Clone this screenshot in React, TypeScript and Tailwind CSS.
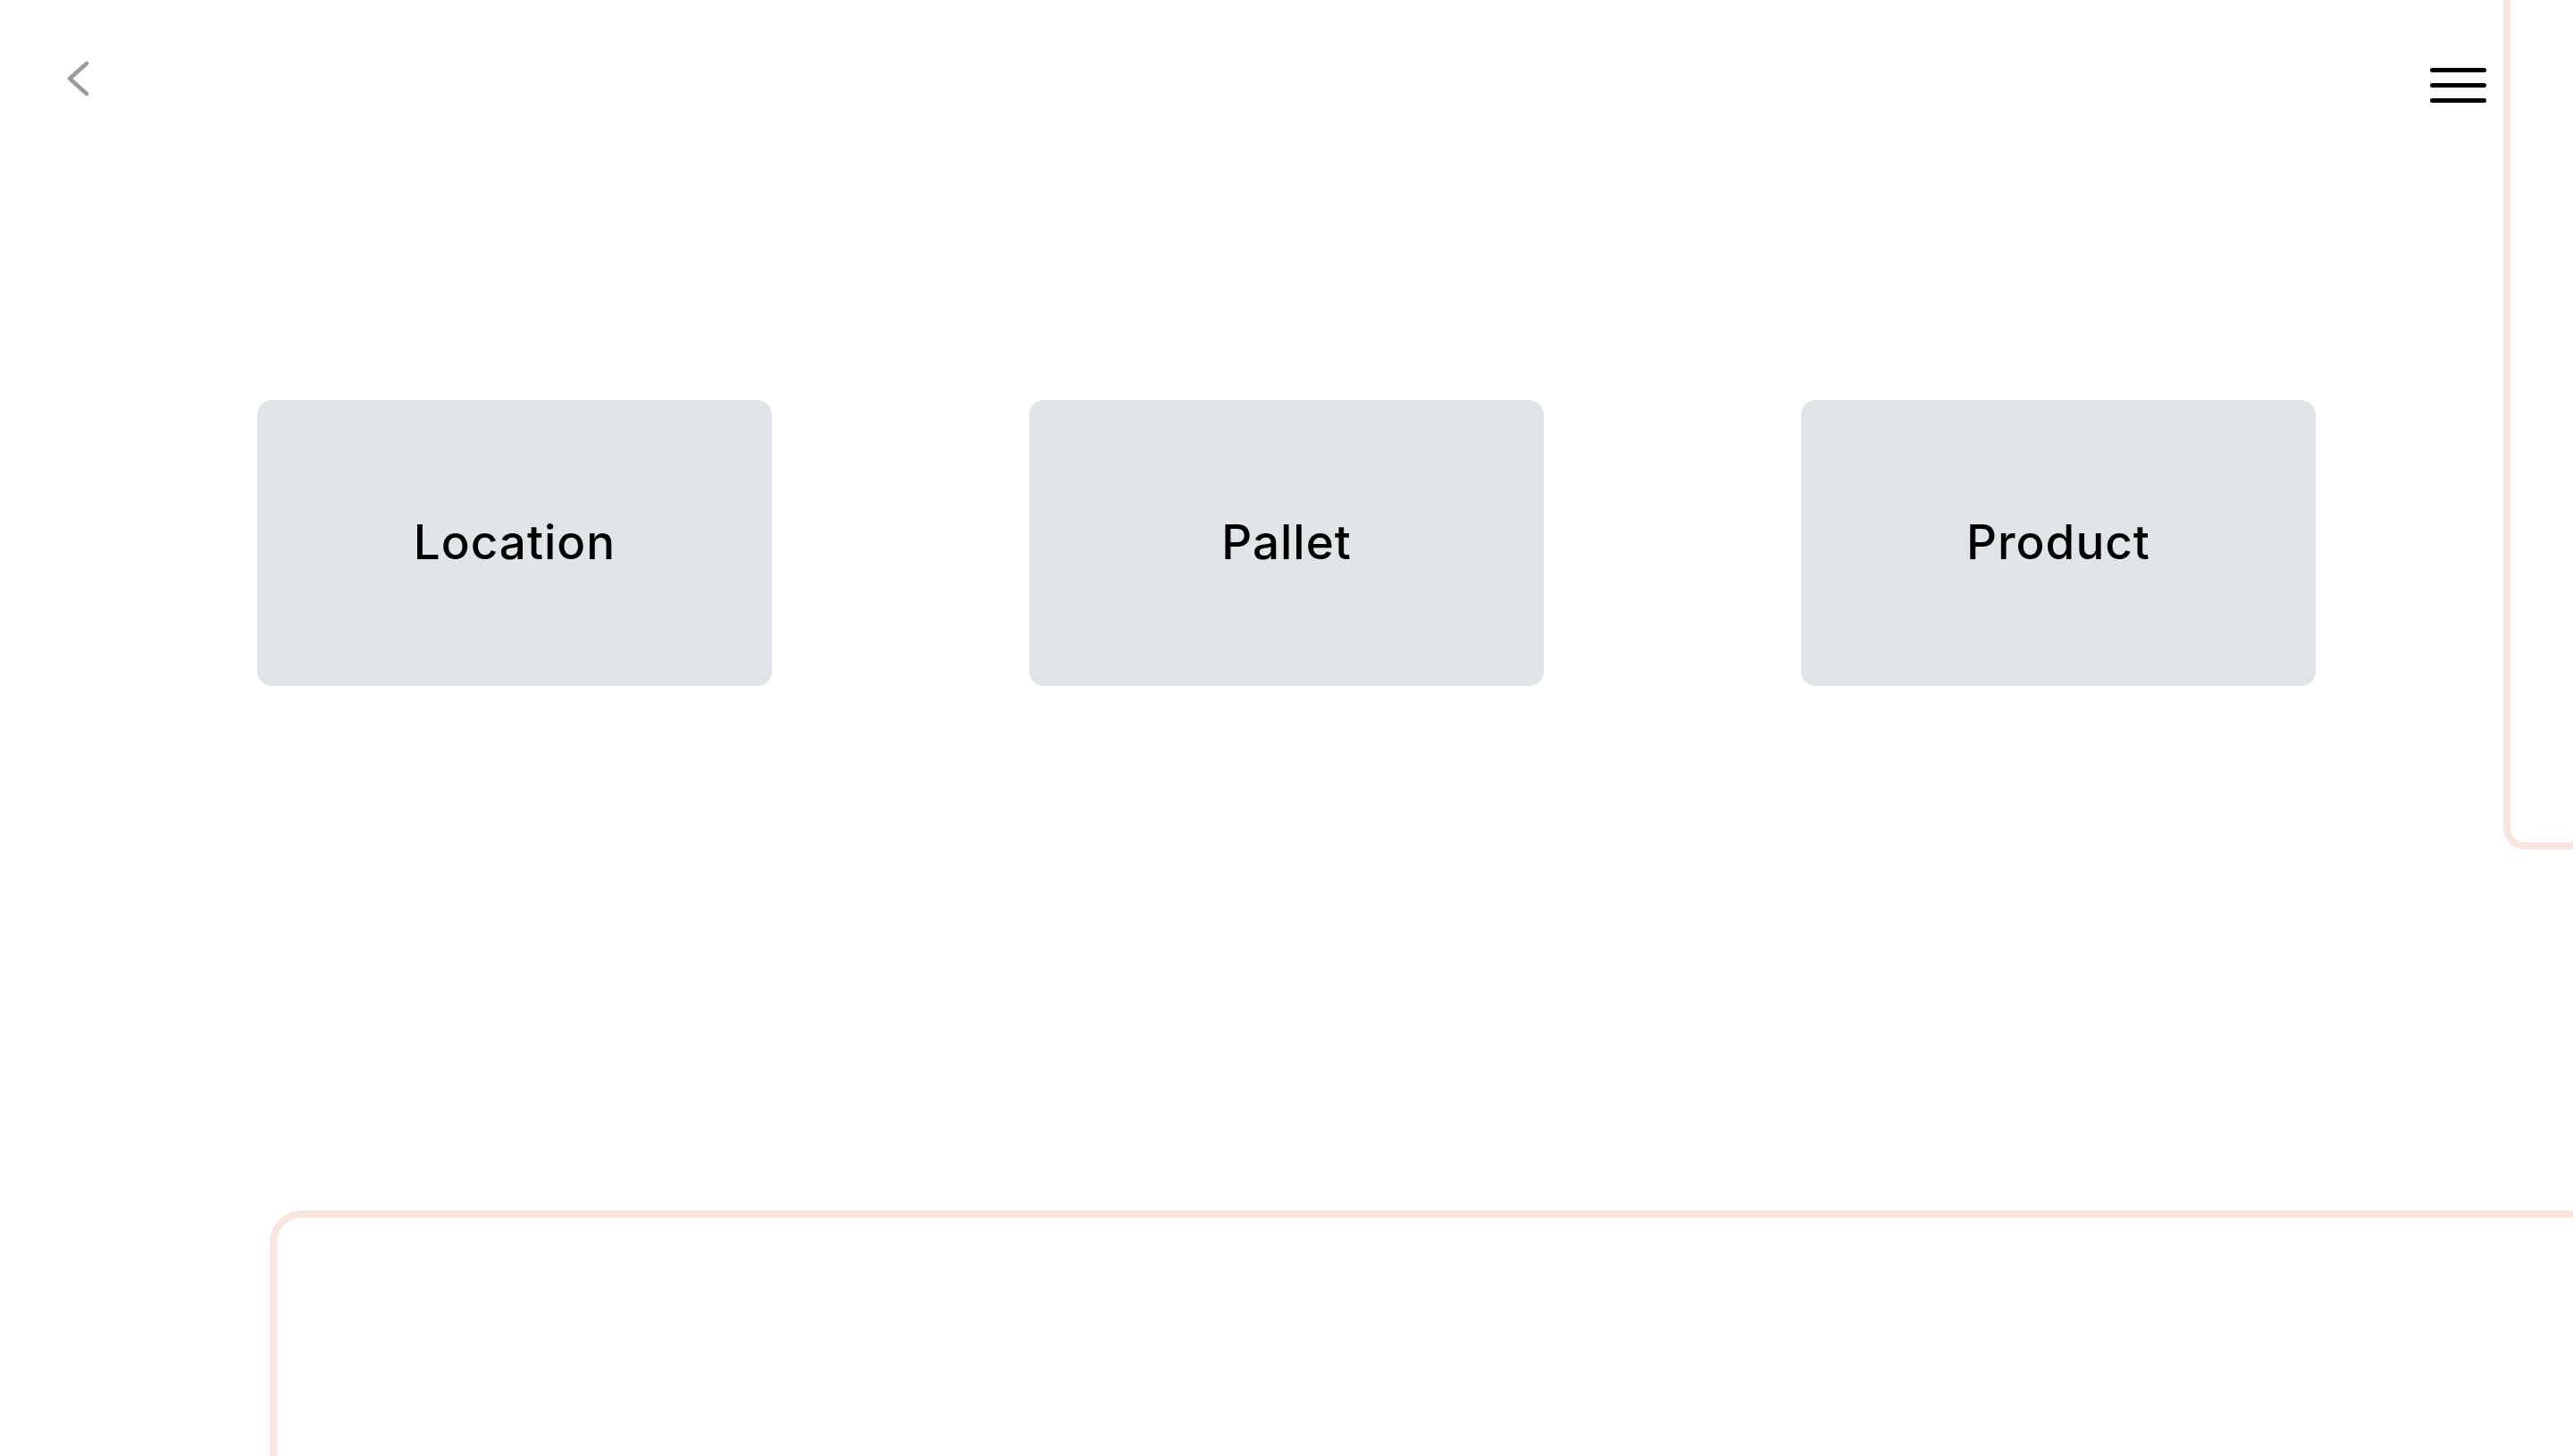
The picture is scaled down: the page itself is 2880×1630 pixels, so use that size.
import React from 'react';

const items = ['Location', 'Pallet', 'Product'];

const App = () => {
  return (
    <div className="relative w-full h-[1630px] overflow-hidden bg-white font-['Inter','Liberation_Sans',sans-serif]">
      {/* decorative outlines */}
      <div className="absolute left-[2802px] top-[-100px] w-[200px] h-[1051px] border-l-8 border-b-8 border-[#f8e5df] rounded-bl-[24px]" />
      <div className="absolute left-[302px] top-[1355px] w-[2700px] h-[400px] border-l-8 border-t-8 border-[#f8e5df] rounded-tl-[36px]" />

      <header className="relative flex items-start justify-between h-[110px] pt-[68px] pl-[72px] pr-[97px]">
        <button className="block leading-none">
          <svg className="block" width="30" height="42" viewBox="0 0 30 42" fill="none">
            <path d="M25 3 L6 20 L25 37" stroke="#9b9b9b" strokeWidth="4.5" strokeLinecap="round" strokeLinejoin="round" />
          </svg>
        </button>
        <button className="mt-[8px] flex flex-col gap-[12px]">
          <span className="block w-[63px] h-[5px] rounded-full bg-black" />
          <span className="block w-[63px] h-[5px] rounded-full bg-black" />
          <span className="block w-[63px] h-[5px] rounded-full bg-black" />
        </button>
      </header>

      <main className="relative mt-[338px] flex justify-center gap-[288px]">
        {items.map((item) => (
          <button
            key={item}
            className="w-[576px] h-[320px] rounded-[16px] bg-[#e0e5e7] flex items-center justify-center"
          >
            <span className="text-[53px] font-medium text-black tracking-[1px]">{item}</span>
          </button>
        ))}
      </main>
    </div>
  );
};

export default App;
